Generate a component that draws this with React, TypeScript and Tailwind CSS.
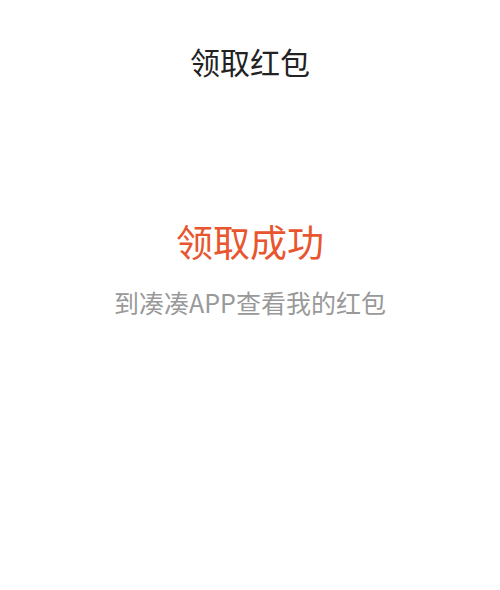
export default function App() {
  const cjk = { fontFamily: '"Noto Sans CJK SC", "Noto Sans", sans-serif' };
  return (
    <div className="w-[500px] h-[590px] bg-white flex flex-col items-center" style={cjk}>
      <div className="h-[126px] w-full flex items-center justify-center pb-[4px]">
        <h1 className="text-[30px] leading-none text-[#222]">领取红包</h1>
      </div>
      <div className="mt-[97px] text-[37px] leading-none text-[#e8552e]">领取成功</div>
      <div className="mt-[30px] text-[25px] leading-none text-[#999]">到凑凑APP查看我的红包</div>
    </div>
  );
}
